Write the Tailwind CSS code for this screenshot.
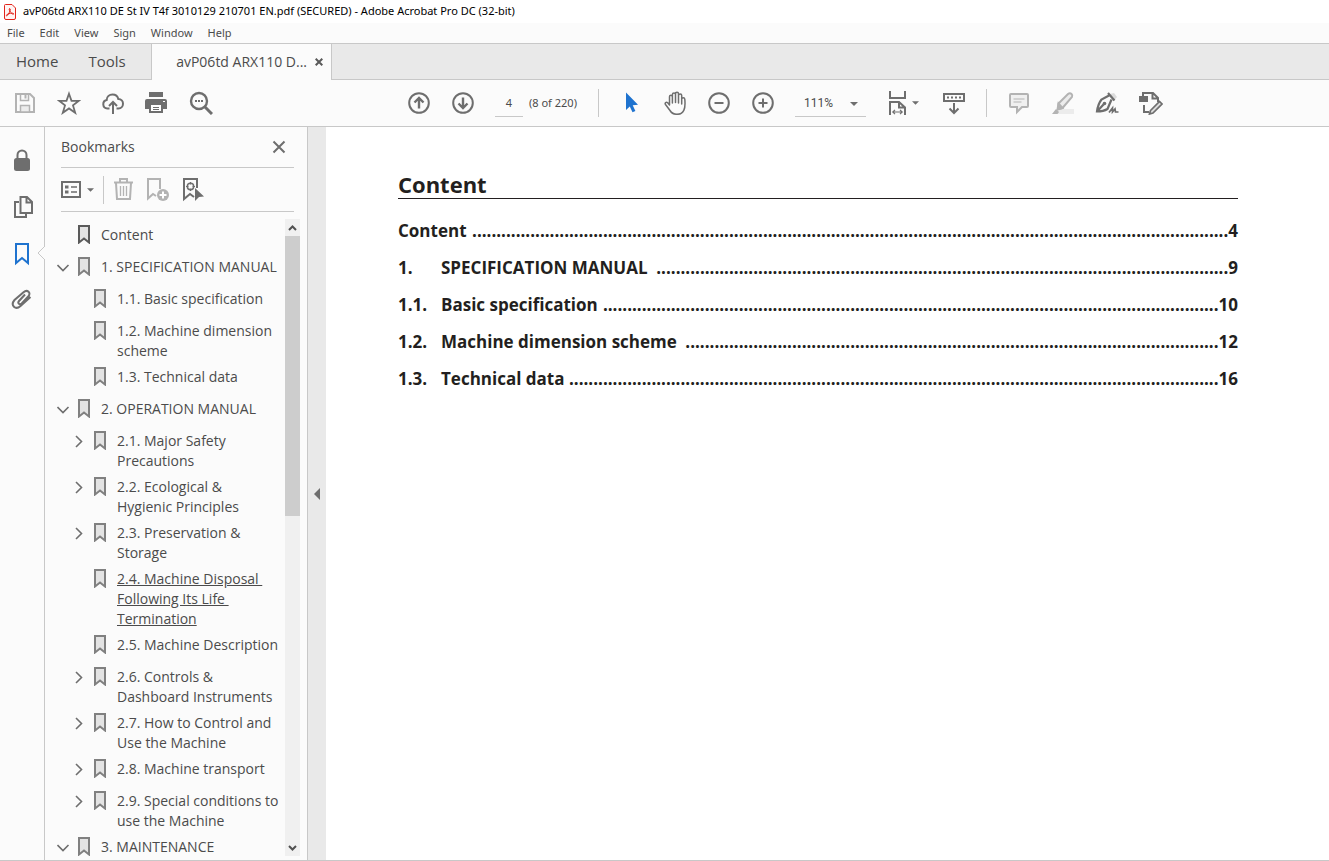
<!DOCTYPE html>
<html lang="en">
<head>
  <meta charset="UTF-8" />
  <meta name="viewport" content="width=device-width, initial-scale=1" />
  <title>avP06td ARX110 DE St IV T4f 3010129 210701 EN.pdf</title>
  <script src="https://cdn.jsdelivr.net/npm/@tailwindcss/browser@4"></script>
</head>
<body class="h-screen flex flex-col overflow-hidden bg-white font-['Open_Sans',sans-serif] text-[#4b4b4b]">

  <!-- Title bar -->
  <header class="flex items-center h-[23px] shrink-0 pl-1 gap-[7px] font-['Noto_Sans',sans-serif] text-black">
    <svg class="w-3 h-4" viewBox="0 0 12 16" fill="none" stroke="#e2231a">
      <path d="M1.5.5H8L11.5 4v10q0 1.5-1.5 1.5H2Q.5 15.500.5 14V1.500Q.5.5 1.500.5z" fill="#fff4f3" />
      <path d="M5.500 4.500q1 0 .7 1.800-.7 2.500-2.700 5-.8 1-1.200.3-.2-.8 2-1.700 2-.8 4.200-.7 1.300.1 1.200.9-.3.600-1.500-.3-1.800-1.300-2.800-3.500-.5-1.600.1-1.800z" />
    </svg>
    <h1 class="text-[11px] whitespace-nowrap">avP06td ARX110 DE St IV T4f 3010129 210701 EN.pdf (SECURED) - Adobe Acrobat Pro DC (32-bit)</h1>
  </header>

  <!-- Menu bar -->
  <nav class="flex items-center h-5 shrink-0 pl-[7px] gap-[15px] bg-[#fbfbfb] font-['Noto_Sans',sans-serif] text-[11px]">
    <button>File</button>
    <button>Edit</button>
    <button>View</button>
    <button>Sign</button>
    <button>Window</button>
    <button>Help</button>
  </nav>

  <!-- Tabs -->
  <div class="flex h-[37px] shrink-0 border-t border-[#c8c8c8] bg-[#e9e9e9] text-sm">
    <div class="flex w-[151px] pl-4 gap-[30px] border-b border-[#c8c8c8] text-[15px]">
      <button>Home</button>
      <button>Tools</button>
    </div>
    <div class="flex items-center justify-end w-[181px] pr-2 gap-2 border-x border-[#c8c8c8] bg-[#fbfbfb]">
      <button>avP06td ARX110 D...</button>
      <button aria-label="Close tab">
        <svg class="w-2 h-2" viewBox="0 0 8 8" stroke="#5a5a5a" stroke-width="2"><path d="M.7.7l6.600 6.600M7.300.7L.7 7.300" /></svg>
      </button>
    </div>
    <div class="flex-1 border-b border-[#c8c8c8]"></div>
  </div>

  <!-- Toolbar -->
  <div class="flex items-center h-[47px] shrink-0 pl-[3px] border-b border-[#c8c8c8] bg-[#fbfbfb] font-['Noto_Sans',sans-serif] text-[11px]">
    <button class="w-11 flex justify-center" aria-label="Save">
      <svg class="w-6 h-6" viewBox="0 0 24 24" fill="none" stroke="#b3b3b3" stroke-width="2">
        <path d="M3 3h14l4 4v14H3z" />
        <path d="M7.500 14.500h9V21h-9z" fill="#ececec" stroke-width="1.500" />
        <path d="M7.500 3v6.500h8V3" stroke-width="1.500" />
        <path d="M12.500 4v3.500" />
      </svg>
    </button>
    <button class="w-11 flex justify-center" aria-label="Star">
      <svg class="w-6 h-6" viewBox="0 0 24 24" fill="none" stroke="#6e6e6e" stroke-width="1.800">
        <path d="M12 2.800l2.500 7h7.400l-5.900 4.600 2.200 7.400-6.200-4.400-6.200 4.400L8 14.400 2.100 9.800h7.400z" />
      </svg>
    </button>
    <button class="w-11 flex justify-center" aria-label="Upload">
      <svg class="w-6 h-6" viewBox="0 0 24 24" fill="none" stroke="#6e6e6e" stroke-width="2">
        <path d="M8.500 17.500H6.300a4.300 4.300 0 0 1-.6-8.500c0-3.500 2.800-5.500 5.800-5.500 3 0 5.200 1.800 5.800 4.500 3 0 4.700 2.200 4.700 4.700 0 2.800-2 4.800-4.500 4.800h-2" />
        <path d="M12 23V11M8 15l4-4 4 4" />
      </svg>
    </button>
    <button class="w-11 flex justify-center" aria-label="Print">
      <svg class="w-6 h-6" viewBox="0 0 24 24">
        <path d="M4 1h14v5H4zM2 8h18q2 0 2 2v8h-4v-4H4v4H0v-8q0-2 2-2z" fill="#6e6e6e" />
        <path d="M5 13h12v8H5z" fill="#fff" stroke="#6e6e6e" stroke-width="2" />
        <path d="M8 16.500h6M8 18.500h6" stroke="#6e6e6e" />
        <path d="M18 10.500h2" stroke="#fff" />
      </svg>
    </button>
    <button class="w-11 flex justify-center" aria-label="Find">
      <svg class="w-6 h-6" viewBox="0 0 24 24" fill="none" stroke="#6e6e6e">
        <circle cx="10" cy="10" r="8" stroke-width="2.400" />
        <path d="M16 16l7 7" stroke-width="3" />
        <path d="M6 10h2M9 10h2M12 10h2" stroke-width="1.800" />
      </svg>
    </button>

    <button class="w-11 ml-[174px] flex justify-center" aria-label="Previous page">
      <svg class="w-6 h-6" viewBox="0 0 24 24" fill="none" stroke="#6e6e6e" stroke-width="2">
        <circle cx="12" cy="12" r="9.800" /><path d="M12 17.500V7.500M7.500 11.500L12 7l4.500 4.500" stroke-width="2.400" />
      </svg>
    </button>
    <button class="w-11 flex justify-center" aria-label="Next page">
      <svg class="w-6 h-6" viewBox="0 0 24 24" fill="none" stroke="#6e6e6e" stroke-width="2">
        <circle cx="12" cy="12" r="9.800" /><path d="M12 6.500v10M7.500 12.500L12 17l4.500-4.500" stroke-width="2.400" />
      </svg>
    </button>
    <input class="w-7 h-[27px] ml-[10px] border-b border-[#c8c8c8] text-center" type="text" value="4" aria-label="Page number" />
    <span class="w-[69px] pl-[6px] whitespace-nowrap">(8 of 220)</span>
    <div class="w-px h-7 ml-[6px] mr-[10px] bg-[#c8c8c8]"></div>

    <button class="w-11 flex justify-center" aria-label="Select">
      <svg class="w-6 h-6" viewBox="0 0 24 24" fill="#1f73cf"><path d="M7 1.500l12 12.300-5.300.4 2.700 5.700-2.900 1.300-2.700-5.700L7 19z" /></svg>
    </button>
    <button class="w-11 flex justify-center" aria-label="Hand">
      <svg class="w-6 h-6" viewBox="0 0 24 24" fill="none" stroke="#6e6e6e" stroke-width="1.500" stroke-linejoin="round">
        <path d="M6.500 14V5.800q0-1.500 1.400-1.500t1.500 1.500V12 3.500Q9.500 2 11 2t1.500 1.500v8-8.800q0-1.400 1.500-1.400t1.500 1.400V12 4.500Q15.700 3 17.200 3t1.500 1.500V13 8.300q0-1.500 1.500-1.500t1.600 1.500c.4 4 .5 8-1 11-1.300 2.700-3.500 4-6.800 4-3.500 0-5.500-1.300-7-3.800l-4.500-6c-1-1.600.7-3 2.200-1.700z" />
      </svg>
    </button>
    <button class="w-11 flex justify-center" aria-label="Zoom out">
      <svg class="w-6 h-6" viewBox="0 0 24 24" fill="none" stroke="#6e6e6e" stroke-width="2">
        <circle cx="12" cy="12" r="9.800" /><path d="M7.500 12h9" />
      </svg>
    </button>
    <button class="w-11 flex justify-center" aria-label="Zoom in">
      <svg class="w-6 h-6" viewBox="0 0 24 24" fill="none" stroke="#6e6e6e" stroke-width="2">
        <circle cx="12" cy="12" r="9.800" /><path d="M7.500 12h9M12 7.500v9" />
      </svg>
    </button>
    <div class="relative w-[71px] ml-[10px]">
      <select class="w-full h-[27px] pl-[9px] border-b border-[#c8c8c8] appearance-none font-[Roboto,sans-serif] text-xs" aria-label="Zoom level">
        <option>111%</option>
      </select>
      <svg class="absolute right-2 top-3 w-2 h-1 pointer-events-none" viewBox="0 0 8 4" fill="#6e6e6e"><path d="M0 0h8L4 4z" /></svg>
    </div>
    <button class="flex items-center w-[66px] pl-[21px] gap-px" aria-label="Fit page">
      <svg class="w-6 h-6" viewBox="0 0 24 24" fill="none" stroke="#6e6e6e" stroke-width="2">
        <path d="M3 0v7h15V0M3 24V11h9l6 5.500V24M12 11v5.500h6" />
        <path d="M6 21h9M8 18.800L5.800 21 8 23.200M13 18.800l2.200 2.200-2.200 2.200" stroke-width="1.200" />
      </svg>
      <svg class="w-[7px] h-1" viewBox="0 0 8 4" fill="#6e6e6e"><path d="M0 0h8L4 4z" /></svg>
    </button>
    <button class="w-11 flex justify-center" aria-label="Page display">
      <svg class="w-6 h-6" viewBox="0 0 24 24" fill="none" stroke="#6e6e6e" stroke-width="2">
        <path d="M2 3h20v7H2zM12 12v10M7.500 17.500L12 22l4.500-4.500" />
        <path d="M5 6.500h14" stroke-dasharray="2 2" />
      </svg>
    </button>
    <div class="w-px h-7 mx-[10px] bg-[#c8c8c8]"></div>
    <button class="w-11 flex justify-center" aria-label="Comment">
      <svg class="w-6 h-6" viewBox="0 0 24 24" fill="none" stroke="#b3b3b3" stroke-width="2">
        <path d="M4 3h16q1 0 1 1v11q0 1-1 1h-5l-5 5v-5H4q-1 0-1-1V4q0-1 1-1z" fill="#f0f0f0" />
        <path d="M6.500 8h11M6.500 11h8" stroke-width="1.200" />
      </svg>
    </button>
    <button class="w-11 flex justify-center" aria-label="Highlight">
      <svg class="w-6 h-6" viewBox="0 0 24 24" fill="none" stroke="#b3b3b3" stroke-width="2">
        <path d="M7 18h16v5H3z" fill="#ececec" stroke="none" />
        <path d="M7.500 12.500L17 3q2-1.500 3.500 0t.5 3l-9.500 11-4.500 1z" fill="#ececec" />
        <path d="M7.500 12.500l4 4.500-5 1.500z" fill="#b3b3b3" />
        <path d="M5 18l3 3-1.500 2H1z" fill="#b3b3b3" stroke="none" />
      </svg>
    </button>
    <button class="w-11 flex justify-center" aria-label="Sign">
      <svg class="w-6 h-6" viewBox="0 0 24 24" fill="none" stroke="#6e6e6e" stroke-width="2">
        <path d="M15 3l4-1 3 4-3.500 4z" fill="#dcdcdc" stroke="none" />
        <path d="M13 2l6.500 7.500M14 4.500L6.500 8.500Q3 13 2 20.500q6.500 0 10.500-2.500l4-9.500M2 20.500l6.500-7" stroke-width="2.200" />
        <circle cx="9.500" cy="12.500" r="1.800" fill="#6e6e6e" stroke="none" />
        <path d="M14 21.500l3.500-4.500v4l2.500-3 .5 3h3" stroke-width="1.700" />
      </svg>
    </button>
    <button class="w-11 flex justify-center" aria-label="Edit PDF">
      <svg class="w-6 h-6" viewBox="0 0 24 24" fill="none" stroke="#6e6e6e" stroke-width="2">
        <path d="M5 14v7h5M4 5V2h10l5 5v4M13.500 2v5.500H19" />
        <path d="M0 5h9v6H0z" fill="#6e6e6e" stroke="none" />
        <path d="M11.500 19.500L20.500 10.500l2.500 2.500-9 9-3.500 1z" fill="#dcdcdc" stroke-width="1.700" />
      </svg>
    </button>
  </div>

  <div class="flex flex-1 min-h-0 border-b border-[#c8c8c8]">

    <!-- Navigation rail -->
    <aside class="relative flex flex-col items-center w-[45px] shrink-0 pt-[21px] gap-[23px] border-r border-[#c8c8c8] bg-[#fbfbfb]">
      <button aria-label="Security">
        <svg class="w-6 h-6" viewBox="0 0 24 24">
          <path d="M7.500 11V7a4.500 4.500 0 0 1 9 0v4" fill="none" stroke="#6e6e6e" stroke-width="2" />
          <rect x="4" y="10" width="16" height="13" rx="2.500" fill="#6e6e6e" />
        </svg>
      </button>
      <button aria-label="Page thumbnails">
        <svg class="w-6 h-6" viewBox="0 0 24 24" fill="none" stroke="#6e6e6e" stroke-width="2">
          <path d="M9 7H5v15h11v-3" />
          <path d="M10.500 2h6.500l5 5v11H10.500zM16.500 2v5.500h5.500" fill="#fbfbfb" />
        </svg>
      </button>
      <button aria-label="Bookmarks">
        <svg class="w-6 h-6" viewBox="0 0 24 24" fill="none" stroke="#1f73cf" stroke-width="2"><path d="M6 2h12v19l-6-5-6 5z" /></svg>
      </button>
      <button aria-label="Attachments">
        <svg class="w-6 h-6" viewBox="0 0 24 24" fill="none" stroke="#6e6e6e" stroke-width="2">
          <path d="M15 5.500l-6 6.500c-1.800 2.200.6 4.300 2.700 2.500l6.500-7c3.500-4-1-7.500-4.700-4.200L4.500 11c-4.500 5.500 1 10.500 6 6l10-9" />
        </svg>
      </button>
      <svg class="absolute -right-px top-[118px] w-2 h-4" viewBox="0 0 8 16" fill="#fbfbfb"><path d="M8 1L1 8l7 7" stroke="#c8c8c8" /></svg>
    </aside>

    <!-- Bookmarks panel -->
    <section class="flex flex-col w-[263px] shrink-0 border-r border-[#c8c8c8] bg-[#fbfbfb] text-sm">
      <div class="flex items-center justify-between h-[41px] ml-4 mr-[13px] pr-2 border-b border-[#c8c8c8]">
        <h2>Bookmarks</h2>
        <button aria-label="Close panel">
          <svg class="w-[14px] h-[14px]" viewBox="0 0 14 14" stroke="#6e6e6e" stroke-width="2"><path d="M1.500 1.500l11 11M12.500 1.500l-11 11" /></svg>
        </button>
      </div>
      <div class="flex items-center h-11 ml-4 mr-[13px] border-b border-[#c8c8c8]">
        <button class="flex items-center gap-1" aria-label="Options">
          <svg class="w-[22px] h-6" viewBox="0 0 22 24" fill="none" stroke="#6e6e6e" stroke-width="2">
            <path d="M1 4h18v15H1z" /><path d="M10 9h6M10 14h6" stroke-width="1.500" /><path d="M4 9h3.500M4 14h3.500" stroke-width="3" />
          </svg>
          <svg class="w-[7px] h-1" viewBox="0 0 8 4" fill="#6e6e6e"><path d="M0 0h8L4 4z" /></svg>
        </button>
        <div class="w-px h-7 ml-[9px] mr-2 bg-[#c8c8c8]"></div>
        <button aria-label="Delete bookmark">
          <svg class="w-6 h-6" viewBox="0 0 24 24" fill="none" stroke="#b3b3b3" stroke-width="2">
            <path d="M2 4.500h19M8 4V1h7v3M4 5l1 16h13l1-16" /><path d="M8.500 8v10M11.500 8v10M14.500 8v10" stroke-width="1.300" />
          </svg>
        </button>
        <button class="ml-[10px]" aria-label="New bookmark">
          <svg class="w-6 h-6" viewBox="0 0 24 24" fill="none" stroke="#b3b3b3" stroke-width="2">
            <path d="M14 11V1H2v19.500l5-4.500 3 2" /><circle cx="17" cy="17" r="6" fill="#b3b3b3" stroke="none" /><path d="M13.500 17h7M17 13.500v7" stroke="#fff" />
          </svg>
        </button>
        <button class="ml-3" aria-label="Locate current bookmark">
          <svg class="w-6 h-6" viewBox="0 0 24 24" fill="none" stroke="#6e6e6e" stroke-width="2">
            <path d="M15 10V1H2v20l6-5 4 3" /><circle cx="8.500" cy="8.500" r="3.200" stroke-width="1.500" />
            <path d="M8.500 4v2.500M8.500 10.500V13M4 8.500h2.500M10.500 8.500H13" stroke-width="1.200" />
            <path d="M13 10l9 8.500-5 .5-4 4z" fill="#6e6e6e" stroke="none" />
          </svg>
        </button>
      </div>
      <div class="flex flex-1 min-h-0 pt-[7px] pr-[7px]">
        <ul id="tree" class="flex-1 min-w-0 overflow-hidden leading-5"></ul>
        <div class="flex flex-col items-center w-[15px] mb-1 bg-[#f0f0f0]">
          <svg class="w-[15px] h-[17px] shrink-0" viewBox="0 0 15 17" fill="none" stroke="#505050" stroke-width="2"><path d="M4 11l3.500-3.500L11 11" /></svg>
          <div class="w-full h-[280px] bg-[#cdcdcd]"></div>
          <svg class="w-[15px] h-[17px] mt-auto shrink-0" viewBox="0 0 15 17" fill="none" stroke="#505050" stroke-width="2"><path d="M4 7l3.500 3.500L11 7" /></svg>
        </div>
      </div>
    </section>

    <button class="flex items-center justify-center w-[18px] shrink-0 bg-[#e9e9e9]" aria-label="Collapse panel">
      <svg class="w-[6px] h-3" viewBox="0 0 6 12" fill="#6e6e6e"><path d="M6 0v12L0 6z" /></svg>
    </button>

    <!-- Document page -->
    <main class="flex-1 min-w-0 pl-[72px] pr-[91px] pt-[43px] text-[#231f20]">
      <h2 class="text-[22px] leading-7 font-bold border-b border-[#231f20]">Content</h2>
      <div id="toc" class="flex flex-col gap-[13px] mt-5 text-[17px] leading-6 font-bold"></div>
    </main>
  </div>

  <script>
    // [level, arrow, text]
    const bookmarks = [
      [0, "", "Content"],
      [0, "down", "1. SPECIFICATION MANUAL"],
      [1, "", "1.1. Basic specification"],
      [1, "", "1.2. Machine dimension<br>scheme"],
      [1, "", "1.3. Technical data"],
      [0, "down", "2. OPERATION MANUAL"],
      [1, "right", "2.1. Major Safety<br>Precautions"],
      [1, "right", "2.2. Ecological &amp;<br>Hygienic Principles"],
      [1, "right", "2.3. Preservation &amp;<br>Storage"],
      [1, "", "<u>2.4. Machine Disposal&nbsp;<br>Following Its Life&nbsp;<br>Termination</u>"],
      [1, "", "2.5. Machine Description"],
      [1, "right", "2.6. Controls &amp;<br>Dashboard Instruments"],
      [1, "right", "2.7. How to Control and<br>Use the Machine"],
      [1, "right", "2.8. Machine transport"],
      [1, "right", "2.9. Special conditions to<br>use the Machine"],
      [0, "down", "3. MAINTENANCE"]
    ];
    // [number, title, leader dots, page]
    const contents = [
      ["", "Content", 156, 4],
      ["1.", "SPECIFICATION MANUAL", 118, 9],
      ["1.1.", "Basic specification", 127, 10],
      ["1.2.", "Machine dimension scheme", 110, 12],
      ["1.3.", "Technical data", 134, 16]
    ];
    const arrows = { down: "M.5 4L6 9.500 11.500 4", right: "M3 1l5.500 5.500L3 12", "": "" };

    tree.innerHTML = bookmarks.map(([level, arrow, text], i) => `
      <li class="flex min-h-8 pt-[6px] ${level ? "pl-7" : "pl-3"}">
        <svg class="w-[13px] h-[13px] mt-1 shrink-0" viewBox="0 0 13 13" fill="none" stroke="#6e6e6e" stroke-width="1.600"><path d="${arrows[arrow]}" /></svg>
        <svg class="w-3 h-[19px] ml-2 shrink-0" viewBox="0 0 12 19" fill="#e3e3e3" stroke="${i ? "#808080" : "#5a5a5a"}" stroke-width="2"><path d="M1 1h10v16.500L6 13.500l-5 4z" /></svg>
        <a href="#" class="ml-[11px] whitespace-nowrap">${text}</a>
      </li>
    `).join("");

    toc.innerHTML = contents.map(([num, title, dots, page]) => `
      <a href="#" class="flex">
        ${num ? `<span class="w-[43px] shrink-0">${num}</span>` : ""}
        <span class="whitespace-nowrap">${title}</span>
        <span class="ml-auto whitespace-nowrap">${".".repeat(dots)}${page}</span>
      </a>
    `).join("");
  </script>
</body>
</html>
